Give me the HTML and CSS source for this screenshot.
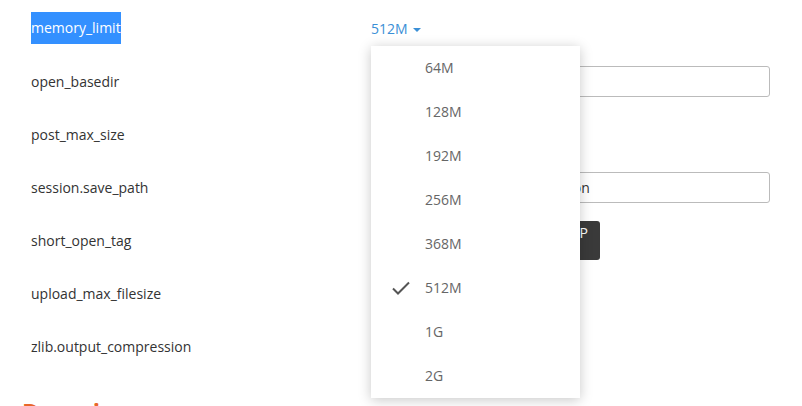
FILE: index.html
```html
<!DOCTYPE html>
<html lang="en">
<head>
  <meta charset="UTF-8">
  <meta name="viewport" content="width=device-width, initial-scale=1.0">
  <title>PHP settings</title>
  <link rel="stylesheet" href="styles.css">
</head>
<body>
  <div class="settings">
    <div class="row">
      <div class="name"><span class="selected">memory_limit</span></div>
      <div class="value">
        <span class="pick">512M <span class="caret"></span></span>
        <ul class="menu">
          <li>64M</li>
          <li>128M</li>
          <li>192M</li>
          <li>256M</li>
          <li>368M</li>
          <li class="checked">
            <svg class="check" width="20" height="16" viewBox="0 0 20 16"><path d="M2 8.5 L7 13.5 L18 2.5" fill="none" stroke="#555" stroke-width="2"/></svg>
            512M
          </li>
          <li>1G</li>
          <li>2G</li>
        </ul>
      </div>
    </div>
    <div class="row">
      <div class="name">open_basedir</div>
      <div class="value"><input class="field" type="text" value=""></div>
    </div>
    <div class="row">
      <div class="name">post_max_size</div>
      <div class="value"><span class="pick">50M <span class="caret"></span></span></div>
    </div>
    <div class="row">
      <div class="name">session.save_path</div>
      <div class="value"><input class="field" type="text" value="/www/server/php/82/var/session"></div>
    </div>
    <div class="row">
      <div class="name">short_open_tag</div>
      <div class="value"><button class="dark" type="button">Off &middot; PHP</button></div>
    </div>
    <div class="row">
      <div class="name">upload_max_filesize</div>
      <div class="value"><span class="pick">50M <span class="caret"></span></span></div>
    </div>
    <div class="row">
      <div class="name">zlib.output_compression</div>
      <div class="value"><span class="pick">Off <span class="caret"></span></span></div>
    </div>
  </div>

  <h2 class="section">Domain</h2>
</body>
</html>
```

FILE: styles.css
```css
body {
  margin: 0;
  font-family: "Open Sans", "Noto Sans", sans-serif;
  font-size: 14px;
  color: #333;
  background: #fff;
}
.settings {
  padding: 1.5px 32px 0 31px;
}
.row {
  display: grid;
  grid-template-columns: 340px 1fr;
  align-items: center;
  height: 53px;
}
.selected {
  display: inline-block;
  background: #3390ff;
  color: #fff;
  line-height: 32px;
}
.value {
  position: relative;
}
.pick {
  color: #3a8fd6;
}
.caret {
  display: inline-block;
  width: 0;
  height: 0;
  margin-left: 2px;
  vertical-align: middle;
  border-left: 4px solid transparent;
  border-right: 4px solid transparent;
  border-top: 4px solid #3a8fd6;
}
.menu {
  position: absolute;
  top: 27px;
  left: 0;
  z-index: 10;
  width: 209px;
  margin: 0;
  padding: 0;
  list-style: none;
  background: #fff;
  box-shadow: 0 2px 12px rgba(0, 0, 0, 0.22);
}
.menu li {
  position: relative;
  height: 44px;
  line-height: 44px;
  padding-left: 54px;
  color: #666;
}
.check {
  position: absolute;
  left: 20px;
  top: 14px;
}
.field {
  box-sizing: border-box;
  width: 100%;
  height: 31px;
  padding: 0 8px 0 3px;
  border: 1px solid #bbb;
  border-radius: 3px;
  font-family: inherit;
  font-size: 14px;
  color: #333;
}
.dark {
  box-sizing: border-box;
  width: 229px;
  height: 39px;
  padding: 0 12px 16px 0;
  border: none;
  border-radius: 3px;
  background: #3a3a3a;
  color: #fff;
  font-family: inherit;
  font-size: 14px;
  text-align: right;
}
.section {
  margin: 22px 0 0 22px;
  font-size: 24px;
  font-weight: 700;
  color: #e8662a;
}
```
